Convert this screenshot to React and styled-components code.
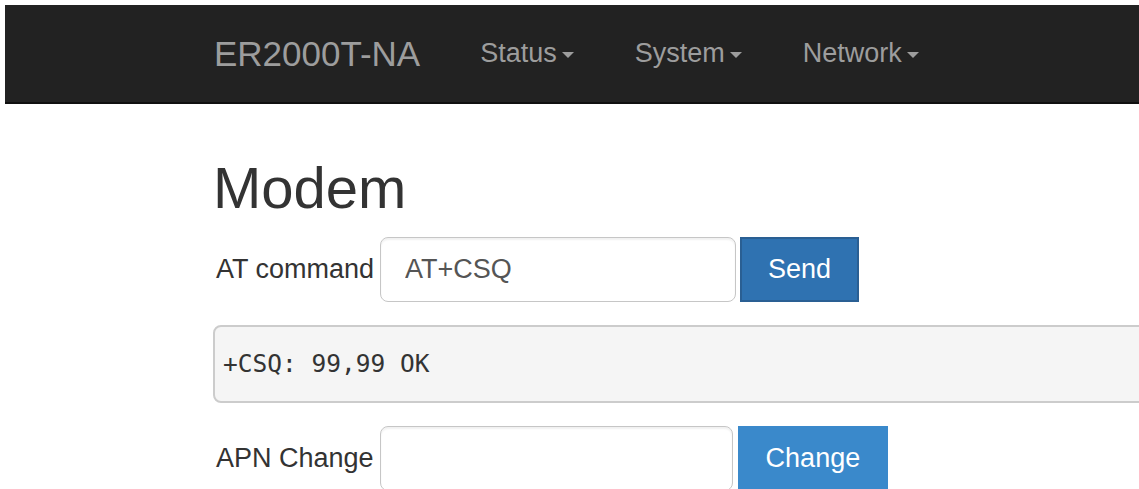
import React from 'react';
import styled, { createGlobalStyle } from 'styled-components';

const GlobalStyle = createGlobalStyle`
  html, body {
    margin: 0;
    padding: 0;
    background: #fff;
    overflow: hidden;
  }
  body {
    font-family: "Liberation Sans", Arial, Helvetica, sans-serif;
    color: #333;
  }
`;

const Page = styled.div`
  padding: 5px 0 0 5px;
  width: 100%;
  height: 489px;
  box-sizing: border-box;
  overflow: hidden;
`;

const Navbar = styled.nav`
  display: flex;
  align-items: center;
  height: 97px;
  padding-left: 180px;
  background: #222;
  border-bottom: 2px solid #101010;
`;

const Brand = styled.a`
  padding: 0 30px 0 29px;
  font-size: 35px;
  color: #9d9d9d;
  text-decoration: none;
`;

const NavLink = styled.a`
  display: flex;
  align-items: center;
  padding: 0 31px 0 30px;
  font-size: 27px;
  color: #9d9d9d;
  text-decoration: none;
`;

const Caret = styled.span`
  display: inline-block;
  width: 0;
  height: 0;
  margin-left: 5px;
  margin-top: 2px;
  border-top: 6px solid #9d9d9d;
  border-left: 6px solid transparent;
  border-right: 6px solid transparent;
`;

const Main = styled.main`
  padding-left: 208px;
`;

const Title = styled.h2`
  margin: 52px 0 17px;
  font-size: 58px;
  font-weight: 500;
  line-height: 64px;
  color: #333;
`;

const FormRow = styled.div`
  display: flex;
  align-items: center;
  height: 65px;
`;

const Label = styled.label`
  margin-left: 3px;
  margin-right: 6px;
  font-size: 27px;
  color: #333;
`;

const Input = styled.input`
  width: ${({ $width }) => $width}px;
  height: 65px;
  box-sizing: border-box;
  padding: 0 24px;
  font-family: inherit;
  font-size: 27px;
  color: #555;
  background: #fff;
  border: 1px solid #c6c6c6;
  border-radius: 8px;
  box-shadow: inset 0 2px 2px rgba(0, 0, 0, 0.06);
  outline: none;
`;

const Button = styled.button`
  height: 65px;
  margin-left: ${({ $gap }) => $gap}px;
  padding: 0 26px;
  font-family: inherit;
  font-size: 27px;
  color: #fff;
  background: ${({ $tone }) => ($tone === 'dark' ? '#2f72b1' : '#3a89cb')};
  border: 2px solid ${({ $tone }) => ($tone === 'dark' ? '#2a5f93' : '#3a89cb')};
  border-radius: 0;
  cursor: pointer;
`;

const Output = styled.pre`
  width: 950px;
  box-sizing: border-box;
  margin: 23px 0;
  padding: 19px 8px;
  font-family: "DejaVu Sans Mono", "Liberation Mono", monospace;
  font-size: 24.5px;
  line-height: 36px;
  color: #333;
  background: #f5f5f5;
  border: 2px solid #ccc;
  border-radius: 8px;
`;

export default function App() {
  return (
    <>
      <GlobalStyle />
      <Page>
        <Navbar>
          <Brand href="#">ER2000T-NA</Brand>
          <NavLink href="#">Status<Caret /></NavLink>
          <NavLink href="#">System<Caret /></NavLink>
          <NavLink href="#">Network<Caret /></NavLink>
        </Navbar>
        <Main>
          <Title>Modem</Title>
          <FormRow>
            <Label>AT command</Label>
            <Input $width={356} defaultValue="AT+CSQ" />
            <Button $gap={4} $tone="dark">Send</Button>
          </FormRow>
          <Output>+CSQ: 99,99 OK</Output>
          <FormRow>
            <Label>APN Change</Label>
            <Input $width={353} />
            <Button $gap={5}>Change</Button>
          </FormRow>
        </Main>
      </Page>
    </>
  );
}
